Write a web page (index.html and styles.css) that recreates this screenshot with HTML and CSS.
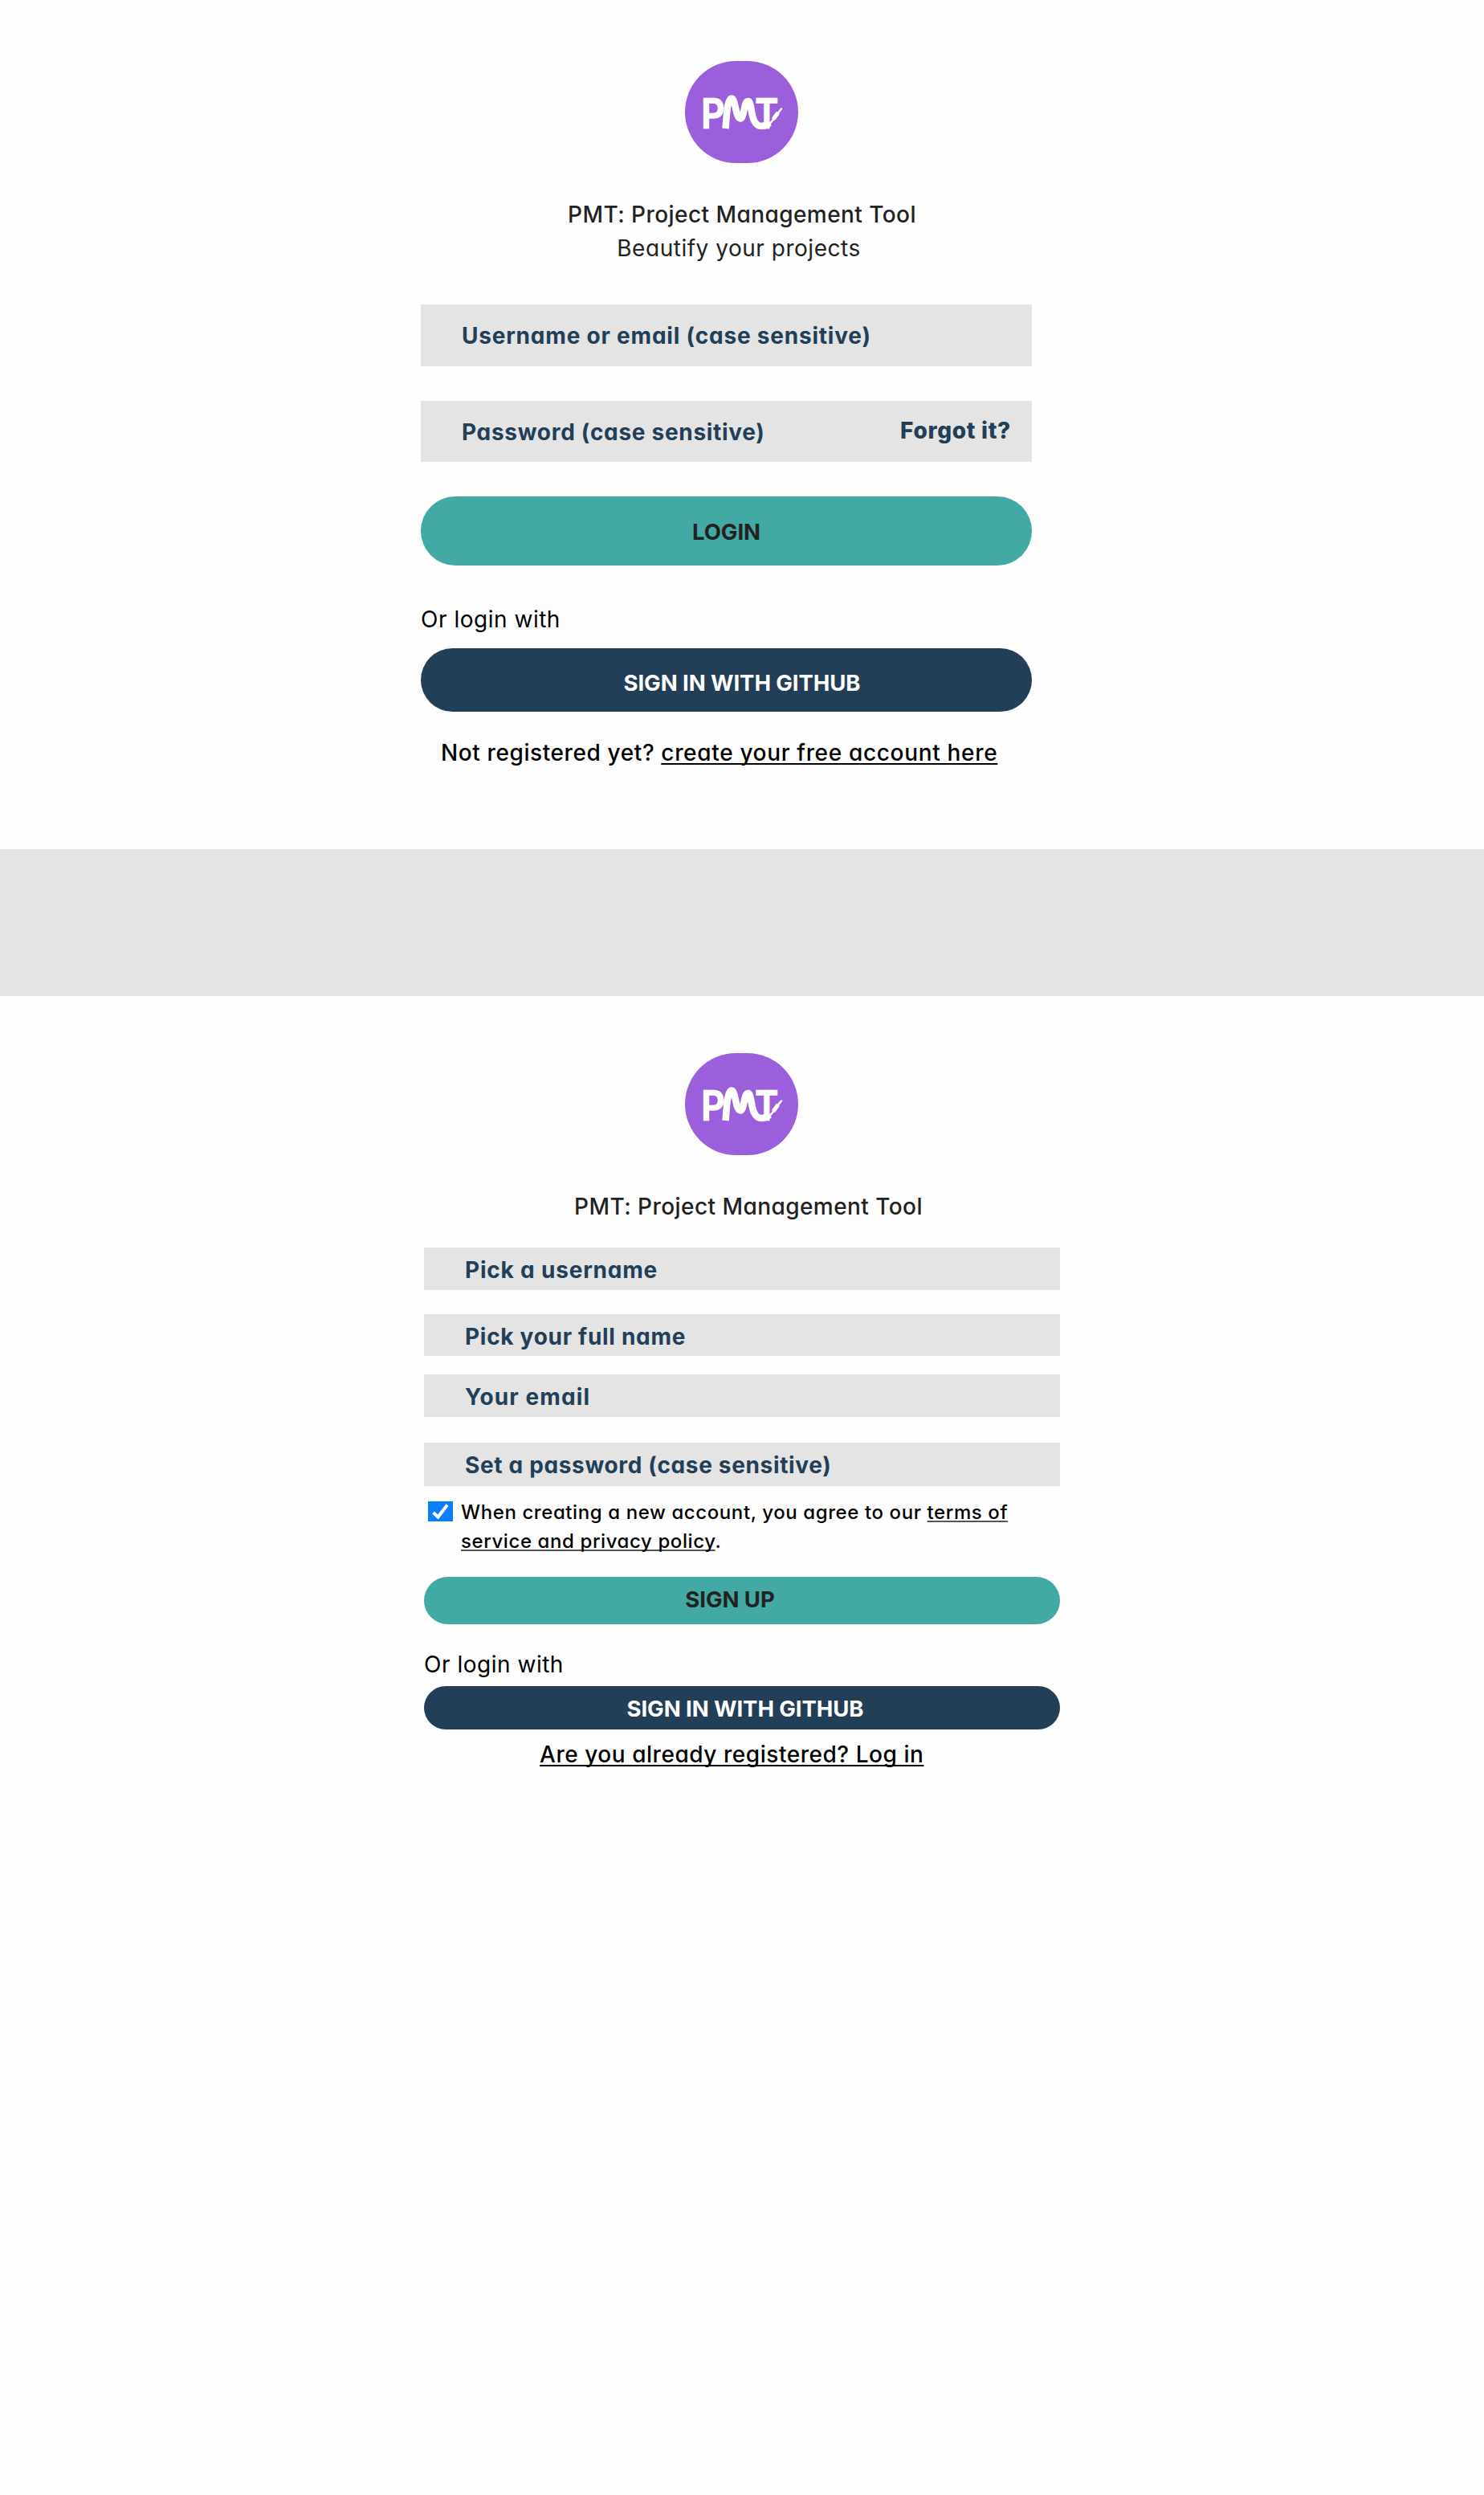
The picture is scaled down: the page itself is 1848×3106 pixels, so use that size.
FILE: index.html
```
<!DOCTYPE html>
<html lang="en">
<head>
<meta charset="utf-8">
<title>PMT: Project Management Tool</title>
<link rel="stylesheet" href="styles.css">
</head>
<body>
<section class="panel login">
  <svg class="logo" viewBox="0 0 141 127" role="img" aria-label="PMT">
    <text class="logo-letter" x="20" y="84" textLength="30" lengthAdjust="spacingAndGlyphs">P</text>
    <path class="logo-swash" d="M50.500 84 C52 68 52.500 46.500 58 46.500 C63 46.500 63 71.500 69 71.500 C74 71.500 73 50 78.500 50 C84.500 50 80 81 95.500 81 Q101 81 105 77"/>
    <text class="logo-letter" x="87" y="84" textLength="29.500" lengthAdjust="spacingAndGlyphs">T</text>
    <path class="logo-pen" d="M104 80 L111.500 71"/>
    <path class="logo-brush" d="M111 71 L115 65.500"/>
    <path class="logo-pen" d="M115.500 65 L120 59.500"/>
  </svg>
  <h1 class="title">PMT: Project Management Tool</h1>
  <p class="tagline">Beautify your projects</p>
  <form class="form">
    <div class="field"><span class="field-user">Username or email (case sensitive)</span></div>
    <div class="field field-password"><span>Password (case sensitive)</span><a class="forgot">Forgot it?</a></div>
    <div class="button primary">LOGIN</div>
    <p class="or">Or login with</p>
    <div class="button github">SIGN IN WITH GITHUB</div>
    <p class="switch">Not registered yet? <a class="link link-create">create your free account here</a></p>
  </form>
</section>

<div class="band"></div>

<section class="panel signup">
  <svg class="logo" viewBox="0 0 141 127" role="img" aria-label="PMT">
    <text class="logo-letter" x="20" y="84" textLength="30" lengthAdjust="spacingAndGlyphs">P</text>
    <path class="logo-swash" d="M50.500 84 C52 68 52.500 46.500 58 46.500 C63 46.500 63 71.500 69 71.500 C74 71.500 73 50 78.500 50 C84.500 50 80 81 95.500 81 Q101 81 105 77"/>
    <text class="logo-letter" x="87" y="84" textLength="29.500" lengthAdjust="spacingAndGlyphs">T</text>
    <path class="logo-pen" d="M104 80 L111.500 71"/>
    <path class="logo-brush" d="M111 71 L115 65.500"/>
    <path class="logo-pen" d="M115.500 65 L120 59.500"/>
  </svg>
  <h1 class="title">PMT: Project Management Tool</h1>
  <form class="form">
    <div class="field">Pick a username</div>
    <div class="field field-name">Pick your full name</div>
    <div class="field field-email">Your email</div>
    <div class="field field-new-password">Set a password (case sensitive)</div>
    <div class="terms">
      <svg class="check" viewBox="0 0 31 25"><path d="M6.500 14 L12.500 19.500 L24 4.500"/></svg>
      <p class="terms-text">When creating a new account, you agree to our <a class="link">terms of<br>service and privacy policy</a>.</p>
    </div>
    <div class="button primary">SIGN UP</div>
    <p class="or">Or login with</p>
    <div class="button github">SIGN IN WITH GITHUB</div>
    <p class="switch"><a class="link">Are you already registered? Log in</a></p>
  </form>
</section>
</body>
</html>
```
FILE: styles.css
```
* { box-sizing: border-box; }

body {
  margin: 0;
  min-height: 3106px;
  background: #fefefe;
  color: #000;
  font: 400 28px/42px Inter, "Open Sans", sans-serif;
  font-feature-settings: "cv11";
  letter-spacing: 0.52px;
}

h1, p { margin: 0; font-size: inherit; }

.panel { display: flow-root; }
.login { height: 1057px; }
.signup { height: 1866px; }
.band { height: 183px; background: #e4e4e4; }

.logo {
  display: block;
  width: 141px;
  height: 127px;
  margin: 76px auto 43px 853px;
  border-radius: 63.5px;
  background: #9b5fdb;
}
.signup .logo { margin-top: 71px; }
.logo-letter { fill: #fff; stroke: #fff; stroke-width: 0.5; font: 700 52px Inter, sans-serif; letter-spacing: 0; }
.logo-swash { fill: none; stroke: #fff; stroke-width: 8.5; stroke-linejoin: round; }
.logo-pen { fill: none; stroke: #fff; stroke-width: 2.5; stroke-linecap: round; }
.logo-brush { fill: none; stroke: #fff; stroke-width: 5; stroke-linecap: round; }

.title { color: #222; font-weight: 500; text-align: center; letter-spacing: 0.44px; }
.tagline { color: #222; text-align: center; padding-right: 8px; }
.signup .title { padding-left: 16px; }

.form { width: 761px; margin: 49px 0 0 524px; }
.signup .form { width: 792px; margin: 30px 0 0 528px; }

.field {
  display: flex;
  justify-content: space-between;
  height: 77px;
  padding: 18px 26px 0 51px;
  background: #e4e4e4;
  color: #233e57;
  font-weight: 700;
  letter-spacing: 0.7px;
}
.field-user { letter-spacing: 0.79px; }
.field-password { height: 76px; margin-top: 43px; }
.forgot { margin-top: -2px; font-weight: 800; }
.signup .field { height: 53px; padding-top: 7px; letter-spacing: 0.8px; }
.signup .field-name { height: 52px; margin-top: 30px; letter-spacing: 0.7px; }
.signup .field-email { margin-top: 23px; letter-spacing: 1.1px; }
.signup .field-new-password { height: 54px; margin-top: 32px; letter-spacing: 0.66px; }

.button {
  height: 86px;
  border-radius: 43px;
  font-size: 27.5px;
  font-weight: 700;
  letter-spacing: -0.07px;
  text-align: center;
}
.primary { margin-top: 43px; padding-top: 23px; background: #42a9a4; color: #222; }
.github { height: 79px; margin-top: 15px; padding: 22px 0 0 39px; background: #233e57; color: #fff; }
.signup .primary { height: 59px; margin-top: 26px; padding: 7px 30px 0 0; }
.signup .github { height: 54px; margin-top: 6px; padding: 7px 0 0 8px; }

.or { margin-top: 46px; }
.signup .or { margin-top: 29px; }

.switch { margin-top: 30px; padding-left: 25px; font-weight: 500; letter-spacing: 0.6px; }
.signup .switch { margin-top: 10px; padding-left: 144px; letter-spacing: 0.54px; }
.link {
  text-decoration: underline;
  text-decoration-thickness: 2px;
  text-decoration-skip-ink: none;
  text-underline-offset: 3px;
}
.link-create { letter-spacing: 0.67px; }

.terms { display: flex; margin-top: 15px; padding-left: 5px; }
.check { flex: none; width: 31px; height: 25px; margin: 4px 10px 0 0; background: #0a7ff8; }
.check path { fill: none; stroke: #fff; stroke-width: 4; }
.terms-text { font-size: 24px; font-weight: 500; line-height: 36px; letter-spacing: 0.59px; }
.terms-text .link { text-decoration-color: #555; text-underline-offset: 2px; }
```
